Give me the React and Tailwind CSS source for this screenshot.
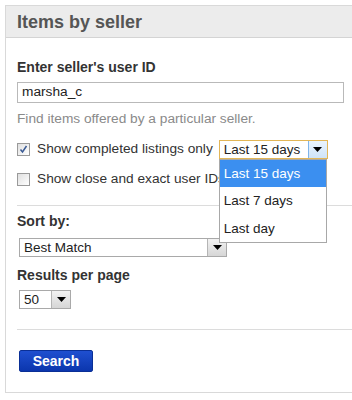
import React from 'react';

const Arrow = ({ focused }) => (
  <span
    className={
      'flex items-center justify-center w-[19px] h-full border-l ' +
      (focused
        ? 'border-[#7eb4ea] bg-gradient-to-b from-[#eaf4fd] to-[#cfe4f8]'
        : 'border-[#b5b5b5] bg-gradient-to-b from-[#f2f2f2] to-[#d6d6d6]')
    }
  >
    <svg width="9" height="5" viewBox="0 0 9 5">
      <path d="M0 0 L9 0 L4.5 5 Z" fill="#000" />
    </svg>
  </span>
);

const Select = ({ value, width, focused }) => (
  <div
    className={
      'flex items-stretch h-[19px] bg-white border ' +
      (focused ? 'border-[#e2b657]' : 'border-[#a9a9a9]')
    }
    style={{ width }}
  >
    <span className="flex-1 pl-[4px] text-[13.5px] leading-[17px] text-[#222] whitespace-nowrap overflow-hidden">
      {value}
    </span>
    <Arrow focused={focused} />
  </div>
);

const Checkbox = ({ checked }) => (
  <span className="flex items-center justify-center w-[13px] h-[13px] border border-[#9a9a9a] bg-gradient-to-br from-[#e0e0e0] to-[#ffffff]">
    {checked && (
      <svg width="9" height="9" viewBox="0 0 9 9">
        <path d="M1.5 4.5 L3.5 7 L7.5 1" stroke="#3a5a94" strokeWidth="1.5" fill="none" />
      </svg>
    )}
  </span>
);

const App = () => {
  return (
    <div className="w-[352px] h-[400px] bg-white overflow-hidden pt-[5px] pl-[5px]" style={{ fontFamily: '"Liberation Sans", Arial, sans-serif' }}>
      <div className="border-l border-t border-b border-[#d9d9d9] w-[347px]">
        {/* header */}
        <div className="h-[32px] bg-[#ececec] border-b border-[#d4d4d4] flex items-center px-[11px]">
          <h2 className="text-[18px] font-bold text-[#555] leading-none mt-[1px]">Items by seller</h2>
        </div>

        <div className="pl-[11px] pt-[21px] pb-[19px]">
          <p className="text-[14px] font-bold text-[#333] leading-[17px]">Enter seller's user ID</p>
          <div className="mt-[6px] w-[327px] h-[21px] border border-[#b9b9b9] flex items-center pl-[4px] text-[13.7px] text-[#222]">
            marsha_c
          </div>
          <p className="mt-[7px] text-[13.7px] leading-[17px] text-[#8a8a8a]">Find items offered by a particular seller.</p>

          <div className="mt-[13px] h-[19px] flex items-center">
            <Checkbox checked />
            <span className="ml-[7px] text-[13.7px] text-[#333]">Show completed listings only</span>
            <div className="relative ml-[6px]">
              <Select value="Last 15 days" width={109} focused />
              <ul className="absolute left-0 top-full w-[108px] bg-white border border-[#a8a8a8] z-10 text-[13.5px]">
                <li className="h-[27px] leading-[27px] pl-[4px] bg-[#3b8ff0] text-white">Last 15 days</li>
                <li className="h-[28px] leading-[28px] pl-[4px] text-[#222]">Last 7 days</li>
                <li className="h-[27px] leading-[27px] pl-[4px] text-[#222]">Last day</li>
              </ul>
            </div>
          </div>

          <div className="mt-[11px] h-[19px] flex items-center">
            <Checkbox />
            <span className="ml-[7px] text-[13.7px] text-[#333] whitespace-nowrap">Show close and exact user IDs</span>
          </div>

          <div className="mt-[16px] border-t border-[#dcdcdc]" />

          <p className="mt-[7px] text-[14px] font-bold text-[#333] leading-[17px]">Sort by:</p>
          <div className="mt-[8px] ml-[2px]">
            <Select value="Best Match" width={208} />
          </div>

          <p className="mt-[10px] text-[14px] font-bold text-[#333] leading-[17px]">Results per page</p>
          <div className="mt-[6px] ml-[2px]">
            <Select value="50" width={52} />
          </div>

          <div className="mt-[20px] border-t border-[#dcdcdc]" />

          <button className="mt-[20px] ml-[2px] w-[74px] h-[22px] rounded-[2px] bg-gradient-to-b from-[#1f4fd0] to-[#0b36ad] border border-[#0a2f96] text-white text-[14px] font-bold leading-none">
            Search
          </button>
        </div>
      </div>
    </div>
  );
};

export default App;
